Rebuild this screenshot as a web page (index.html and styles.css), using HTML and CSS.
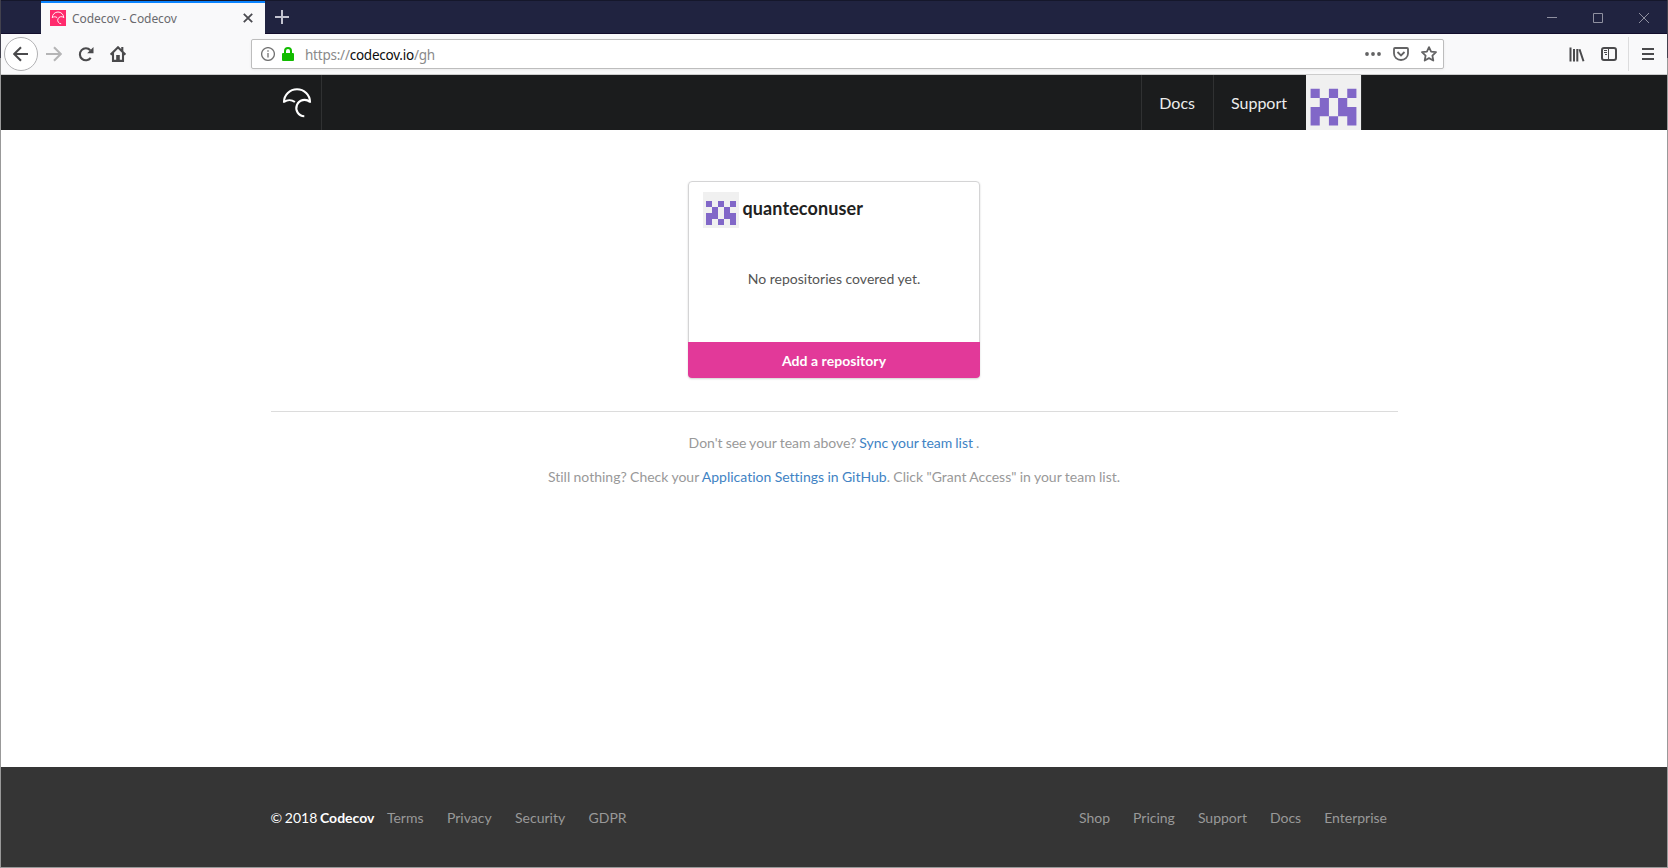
FILE: index.html
```html
<!DOCTYPE html>
<html lang="en">
<head>
<meta charset="utf-8">
<title>Codecov - Codecov</title>
<link rel="stylesheet" href="styles.css">
</head>
<body>
<svg class="defs" aria-hidden="true">
  <symbol id="identicon" viewBox="0 0 12 12">
    <rect width="12" height="12" fill="#f0f0f0"/>
    <path fill="#8167c8" d="M1 3h2v2H1zM5 3h2v2H5zM9 3h2v2H9zM3 5h2v4H3zM7 5h2v4H7zM1 7h2v4H1zM9 7h2v4H9zM5 9h2v2H5z"/>
  </symbol>
  <symbol id="umbrella" viewBox="0 0 30 32">
    <path fill="none" stroke="currentColor" stroke-width="2.1" d="M2 15.800V15a13 12.700 0 0 1 26 0v.8M28 15A8.200 8.200 0 1 0 22.300 29.300M2 15C5 12.800 9.600 12.600 12.900 15"/>
  </symbol>
</svg>
<div class="window">
  <div class="titlebar">
    <div class="tab">
      <span class="favicon"><svg width="14" height="14"><use href="#umbrella"/></svg></span>
      <span class="tab-title">Codecov - Codecov</span>
      <svg class="tab-close" width="10" height="10" viewBox="0 0 10 10"><path d="M.8.8l8.400 8.400M9.200.8L.8 9.200"/></svg>
    </div>
    <svg class="tab-new" width="14" height="14" viewBox="0 0 14 14"><path d="M7 0v14M0 7h14"/></svg>
    <div class="controls">
      <svg width="10" height="10"><path d="M0 4.500h10"/></svg>
      <svg width="10" height="10"><path d="M.5.5h9v9h-9z"/></svg>
      <svg width="10" height="10"><path d="M0 0l10 10M10 0L0 10"/></svg>
    </div>
  </div>
  <div class="toolbar">
    <div class="nav-buttons">
      <span class="back"><svg width="16" height="16" viewBox="0 0 16 16"><path d="M15 8H1.500M8 1.200L1.200 8L8 14.800"/></svg></span>
      <svg class="forward" width="16" height="16" viewBox="0 0 16 16"><path d="M0 8h15M8 1.200L14.800 8L8 14.800"/></svg>
      <svg class="reload" width="16" height="16" viewBox="0 0 16 16"><path d="M12.700 11.900A6 6 0 1 1 12.300 4.200"/><path class="solid" d="M15.500 1v6.200H9.200z"/></svg>
      <svg class="home" width="16" height="16" viewBox="0 0 16 16"><path d="M.6 8.700L8 1.300l7.400 7.400M3 7v7.900h10V7M12.300 1v4"/><path class="solid" d="M6.200 9h3.600v6H6.200z"/></svg>
    </div>
    <div class="urlbar">
      <svg width="14" height="14" viewBox="0 0 14 14" class="info"><circle cx="7" cy="7" r="6.400"/><path d="M7 6v4.500M7 3.300v1.500"/></svg>
      <svg width="12" height="14" viewBox="0 0 12 14" class="lock"><path class="body" d="M1 6h10q1 0 1 1v6q0 1-1 1H1q-1 0-1-1V7q0-1 1-1z"/><path class="shackle" d="M3 7V4a3 3 0 0 1 6 0v3"/></svg>
      <span class="url">https://<b>codecov.io</b>/gh</span>
      <div class="page-actions">
        <svg width="16" height="4" viewBox="0 0 16 4"><g class="dots"><circle cx="2" cy="2" r="1.900"/><circle cx="8" cy="2" r="1.900"/><circle cx="14" cy="2" r="1.900"/></g></svg>
        <svg width="16" height="14" viewBox="0 0 16 14"><path d="M2 1h12q1 0 1 1v4.500a7 6.500 0 0 1-14 0V2q0-1 1-1z"/><path d="M4.500 5L8 8.400L11.500 5"/></svg>
        <svg width="16" height="16" viewBox="0 0 16 16"><path stroke-linejoin="round" d="M8 1.100l2.100 4.500 4.900.6-3.600 3.400.9 4.900L8 12.100l-4.300 2.400.9-4.900L1 6.200l4.900-.6z"/></svg>
      </div>
    </div>
    <div class="menu-buttons">
      <svg width="16" height="15" viewBox="0 0 16 15"><path d="M1.500.5v14M5 2v12.500M8.300 2v12.500M10.500 2.200l4 12"/></svg>
      <svg width="16" height="14" viewBox="0 0 16 14"><rect x="1" y="1" width="14" height="12" rx="2"/><path class="thin" d="M7.500 1v12M3 3.500h3M3 5.500h3M4 7.500h2"/></svg>
      <span class="divider"></span>
      <svg width="12" height="12" viewBox="0 0 12 12"><path d="M0 1h12M0 6h12M0 11h12"/></svg>
    </div>
  </div>
  <header class="header">
    <div class="header-inner">
      <a class="logo"><svg width="30" height="32"><use href="#umbrella"/></svg></a>
      <nav class="header-nav">
        <a class="nav-item">Docs</a>
        <a class="nav-item support">Support</a>
        <svg class="avatar" width="55" height="55"><use href="#identicon"/></svg>
      </nav>
    </div>
  </header>
  <main class="content">
    <section class="card">
      <div class="card-head"><svg width="36" height="36"><use href="#identicon"/></svg><h2 class="username">quanteconuser</h2></div>
      <p class="empty">No repositories covered yet.</p>
      <a class="add">Add a repository</a>
    </section>
    <hr class="rule">
    <p class="hint sync">Don't see your team above? <a>Sync your team list</a> .</p>
    <p class="hint">Still nothing? Check your <a>Application Settings in GitHub</a>. Click "Grant Access" in your team list.</p>
  </main>
  <footer class="footer">
    <div class="footer-inner">
      <span class="copyright">© 2018 <b>Codecov</b></span>
      <nav class="links"><a>Terms</a><a>Privacy</a><a>Security</a><a>GDPR</a></nav>
      <nav class="links end"><a>Shop</a><a>Pricing</a><a>Support</a><a>Docs</a><a>Enterprise</a></nav>
    </div>
  </footer>
</div>
</body>
</html>
```
FILE: styles.css
```css
* { box-sizing: border-box; }
body { margin: 0; background: #fff; font-family: Lato, sans-serif; font-size: 14px; font-variant-ligatures: none; }
p, h2 { margin: 0; }
svg { display: block; flex: none; }
.defs { position: absolute; width: 0; height: 0; }
.window {
  display: flex; flex-direction: column; height: 868px; overflow: hidden;
  padding: 0 1px 1px;
  background: linear-gradient(#42414d 58px, #999 58px);
}

.titlebar { display: flex; align-items: flex-start; height: 34px; background: #202340; border-top: 1px solid #15172b; border-bottom: 1px solid #120d2c; }
.tab { display: flex; align-items: center; width: 224px; height: 33px; margin-left: 40px; padding: 0 12px 2px 9px; background: #f9f9fa; border-top: 2px solid #0a84ff; }
.favicon { display: flex; align-items: center; justify-content: center; width: 16px; height: 16px; background: #ff2b6d; color: #fff; }
.favicon svg { overflow: visible; }
.tab-title { flex: 1; margin: 2px 0 0 6px; font: 12px "Noto Sans", sans-serif; letter-spacing: -.06px; color: #6a6a6e; white-space: nowrap; }
.tab-close { fill: none; stroke: #4a4a4f; stroke-width: 1.8; }
.tab-new { margin: 9px 0 0 10px; fill: none; stroke: #c2c3d0; stroke-width: 2; }
.controls { display: flex; gap: 36px; margin: 12px 18px 0 auto; }
.controls svg { fill: none; stroke: #8f90a0; stroke-width: 1; }

.toolbar { display: flex; align-items: center; height: 41px; background: #f9f9fa; border-bottom: 1px solid #ccc; }
.nav-buttons { display: flex; align-items: center; gap: 16px; padding-left: 3px; width: 250px; }
.nav-buttons svg { fill: none; stroke: #4a4a4c; stroke-width: 2.1; }
.nav-buttons .solid { fill: #4a4a4c; stroke: none; }
.back { display: flex; align-items: center; justify-content: center; width: 34px; height: 34px; margin-right: -8px; background: #fff; border: 1px solid #b1b1b3; border-radius: 50%; }
.nav-buttons .forward { stroke: #b5b5b6; }
.urlbar { display: flex; align-items: center; width: 1193px; height: 30px; padding: 0 6px 0 9px; background: #fff; border: 1px solid #bdbdbd; border-radius: 2px; box-shadow: 0 1px 3px rgba(0,0,0,.06); }
.info { fill: none; stroke: #737373; stroke-width: 1.3; }
.lock { margin-left: 7px; }
.lock .body { fill: #12bc00; }
.lock .shackle { fill: none; stroke: #12bc00; stroke-width: 2; }
.url { margin: 2px 0 0 11px; font: 13.500px "Noto Sans", sans-serif; letter-spacing: -.23px; color: #8a8a8a; }
.url b { font-weight: 400; color: #0c0c0d; }
.page-actions { display: flex; align-items: center; gap: 12px; margin-left: auto; }
.page-actions svg { fill: none; stroke: #636364; stroke-width: 1.8; }
.page-actions .dots { fill: #636364; stroke: none; }
.menu-buttons { display: flex; align-items: center; margin-left: auto; padding-right: 13px; }
.menu-buttons svg { margin-right: 16px; fill: none; stroke: #4a4a4c; stroke-width: 2; }
.menu-buttons svg:last-child { margin: 0 0 0 13px; }
.menu-buttons .thin { stroke-width: 1; }
.divider { width: 1px; height: 34px; margin-left: -5px; background: #dcdcdd; }

.header { height: 55px; background: #1b1c1d; }
.header-inner { display: flex; width: 1092px; height: 55px; margin-left: 269px; border-right: 1px solid #2c2d2e; }
.logo { display: flex; align-items: center; width: 52px; padding-left: 12px; color: #fff; border-right: 1px solid #303132; }
.header-nav { display: flex; margin-left: auto; }
.nav-item { display: flex; align-items: center; padding: 0 18px 0 17px; border-left: 1px solid #303132; font-size: 16px; color: #ececec; }
.nav-item.support { padding-right: 19px; }

.content { flex: 1; display: flex; flex-direction: column; align-items: center; padding-top: 51px; background: #fff; }
.card { display: flex; flex-direction: column; width: 292px; height: 197px; border: 1px solid #d4d4d5; border-radius: 4px; box-shadow: 0 1px 2px rgba(0,0,0,.18); }
.card-head { display: flex; gap: 3.500px; padding: 10px 14px 0; }
.username { padding-top: 3px; font-size: 18px; line-height: 26px; font-weight: 700; letter-spacing: .1px; color: #212121; }
.empty { margin-top: 41px; line-height: 20px; text-align: center; color: #545454; }
.add { margin: auto -1px -1px; height: 36px; line-height: 38px; text-align: center; font-weight: 700; letter-spacing: .05px; color: #fff; background: #e23999; border-radius: 0 0 4px 4px; }
.rule { width: 1127px; height: 1px; margin: 33px 0 21px; border: 0; background: #dcdcdc; }
.hint { height: 20px; margin-bottom: 14px; line-height: 20px; word-spacing: -.25px; color: #999; white-space: nowrap; }
.hint.sync { word-spacing: -.6px; }
.hint a { color: #4183c4; }

.footer { height: 100px; padding-top: 41px; background: #353535; }
.footer-inner { display: flex; width: 1127px; margin: 0 auto; line-height: 20px; }
.copyright { word-spacing: -.9px; color: #fff; }
.links { display: flex; gap: 23.400px; margin-left: 12.500px; color: #999; }
.links.end { gap: 23px; margin: 0 10.500px 0 auto; }
```
